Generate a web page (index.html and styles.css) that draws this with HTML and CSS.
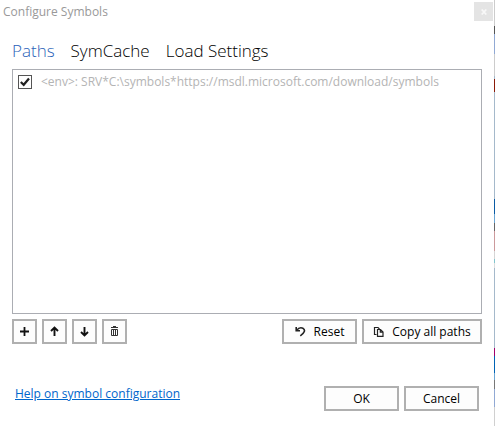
FILE: index.html
```html
<!DOCTYPE html>
<html lang="en">
<head>
<meta charset="utf-8">
<title>Configure Symbols</title>
<link rel="stylesheet" href="styles.css">
</head>
<body>
<div class="window">
  <header class="titlebar">
    <h1 class="title">Configure Symbols</h1>
    <button class="close" type="button" aria-label="Close"><svg width="6" height="6" viewBox="0 0 6 6"><path d="M.7 .5 5.3 5.5M5.3 .5 .7 5.5" stroke="#f8f8f8" stroke-width="1.7"/></svg></button>
  </header>
  <main class="content">
    <nav class="tabs">
      <button class="tab active" type="button">Paths</button>
      <button class="tab" type="button">SymCache</button>
      <button class="tab" type="button">Load Settings</button>
    </nav>
    <div class="list">
      <label class="entry"><input class="check" type="checkbox" checked><span>&lt;env&gt;: SRV*C:\symbols*https://msdl.microsoft.com/download/symbols</span></label>
    </div>
    <div class="toolbar">
      <button class="btn icon" type="button" aria-label="Add"><svg width="11" height="11" viewBox="0 0 11 11"><path d="M5.5 1v9M1 5.5h9" stroke="#111" stroke-width="1.8"/></svg></button>
      <button class="btn icon" type="button" aria-label="Move up"><svg width="11" height="11" viewBox="0 0 11 11"><path d="M5.5 10V1.5M2 5l3.5-3.5L9 5" fill="none" stroke="#111" stroke-width="1.9"/></svg></button>
      <button class="btn icon" type="button" aria-label="Move down"><svg width="11" height="11" viewBox="0 0 11 11"><path d="M5.5 1v8.500M2 6l3.5 3.5L9 6" fill="none" stroke="#111" stroke-width="1.9"/></svg></button>
      <button class="btn icon" type="button" aria-label="Delete"><svg width="11" height="11" viewBox="0 0 11 11"><path d="M2 1.5h7M4 .5h3M2.5 3.5h6v6h-6zM4.5 4v5M6.5 4v5" fill="none" stroke="#333" stroke-width="1"/></svg></button>
      <button class="btn reset" type="button"><svg width="11" height="11" viewBox="0 0 11 11"><path d="M1.2 1v3.7H5M1.5 4.4C3.6 1.8 6 1.2 8 2.3C10.6 4 9.8 6.5 5.3 9.8" fill="none" stroke="#222" stroke-width="1.6"/></svg>Reset</button>
      <button class="btn copy" type="button"><svg width="11" height="11" viewBox="0 0 11 11"><path d="M3.5 8.5H1.500V1.500H5L6.500 3M4.500 3.500H7.500L10 6V10.300H4.500zM7.300 3.500V6.200H10" fill="none" stroke="#222" stroke-width="1.2"/></svg>Copy all paths</button>
    </div>
    <footer class="footer">
      <a class="help" href="#">Help on symbol configuration</a>
      <button class="btn action" type="button">OK</button>
      <button class="btn action" type="button">Cancel</button>
    </footer>
  </main>
</div>
</body>
</html>
```
FILE: styles.css
```css
* { box-sizing: border-box; }
body {
  margin: 0;
  background: #fff;
  color: #000;
  font: 12px/16px "Open Sans", "Noto Sans", sans-serif;
}
button { font: inherit; color: inherit; padding: 0; }
.window {
  display: flex;
  flex-direction: column;
  min-height: 100vh;
  border-right: 1px solid;
  border-image: linear-gradient(#ccc 0 27px, #555 27px 35px, #91a9d4 35px 55px, #ccc 55px 77px, #a5bacd 77px 80px, #8b1a08 80px 93px, #a5b9cb 93px 199px, #0a5ba5 199px 214px, #6ca6d4 214px 223px, #666 223px 231px, #cc9a9c 231px 251px, #d5d5d5 251px 259px, #83c5cd 259px 263px, #ddd 263px 268px, #a5b9cb 268px 347px, #a5006c 347px 355px, #0063b5 355px 372px, #6ca6d4 372px 379px, #777 379px 388px, #91a9d4 388px 406px, #d0d0d0 406px) 1;
}
.titlebar {
  display: flex;
  justify-content: space-between;
  padding: 2px 1px 0 3px;
}
.title {
  margin: 2px 0 0;
  color: #999;
  font-size: 12px;
  font-weight: 400;
  line-height: 16px;
}
.close {
  display: flex;
  align-items: center;
  justify-content: center;
  width: 19px;
  height: 19px;
  border: 0;
  background: #e4e4e4;
}
.content {
  display: flex;
  flex: 1;
  flex-direction: column;
  padding: 18px 12px 15px;
}
.tabs { display: flex; gap: 16px; }
.tab {
  border: 0;
  background: none;
  font-size: 17px;
  font-weight: 300;
  line-height: 24px;
}
.active { color: #2a62b8; }
.list {
  flex: 1;
  margin-top: 6px;
  padding: 4px 5px;
  border: 1px solid #abadb3;
}
.entry {
  display: flex;
  align-items: center;
  gap: 9px;
  color: #b4b4b4;
}
.check {
  appearance: none;
  flex: none;
  width: 14px;
  height: 14px;
  margin: 0;
  border: 1px solid #555;
  background: #fff;
}
.check:checked {
  background: url("data:image/svg+xml,%3Csvg xmlns='http://www.w3.org/2000/svg' viewBox='0 0 12 12'%3E%3Cpath d='M1.8 6 4.7 8.8 10 2.5' fill='none' stroke='%23222' stroke-width='2.2'/%3E%3C/svg%3E") center / 12px 12px;
}
.toolbar {
  display: flex;
  gap: 5px;
  margin-top: 5px;
}
.btn {
  display: flex;
  align-items: center;
  justify-content: center;
  gap: 8px;
  height: 25px;
  border: 2px solid #b0b0b0;
  background: #fdfdfd;
}
.icon { width: 25px; }
.reset { width: 75px; margin-left: auto; }
.copy { width: 120px; }
.footer {
  display: flex;
  align-items: flex-start;
  gap: 5px;
  margin-top: 42px;
  padding: 0 3px;
}
.help {
  margin-right: auto;
  color: #0066cc;
}
.action { width: 75px; }
```
